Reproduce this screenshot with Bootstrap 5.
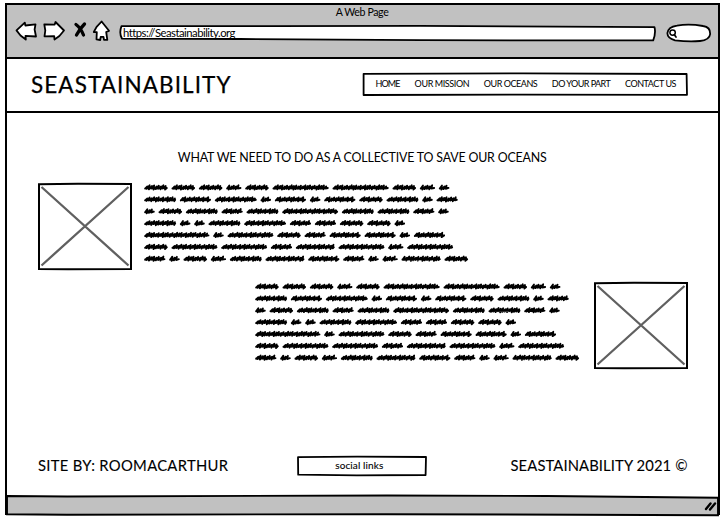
<!DOCTYPE html>
<html lang="en">
<head>
<meta charset="utf-8">
<meta name="viewport" content="width=device-width, initial-scale=1">
<title>A Web Page</title>
<link href="https://cdn.jsdelivr.net/npm/bootstrap@5.3.0/dist/css/bootstrap.min.css" rel="stylesheet">
<style>
  body { font-family: Lato, "Open Sans", sans-serif; color: #000; background: #fff; width: 724px; height: 521px; overflow: hidden; }
  svg { display: block; overflow: visible; }
  .frame { margin: 3px 0 0 5px; width: 714.5px; height: 512px; border: 2px solid #000; border-bottom: 0; }
  .chrome { height: 53.5px; background: #c1c1c1; border-bottom: 2px solid #000; }
  .tab-title { font-size: 10.6px; line-height: 12px; padding-top: 1px; }
  .tools { height: 28px; margin-top: 1px; }
  .ink { fill: #fff; stroke: #000; stroke-width: 1.8; stroke-linejoin: round; stroke-linecap: round; }
  .sketch { position: absolute; inset: 0; z-index: 0; }
  .fit { white-space: nowrap; display: inline-block; position: relative; z-index: 1; }
  .address { width: 536px; height: 16px; margin: 6px 0 0 8.5px; }
  .address .fit { font-size: 11.3px; line-height: 16px; margin-left: 3.5px; vertical-align: top; }
  .site-head { height: 54px; border-bottom: 2px solid #000; padding: 0 30px 0 24px; }
  .brand { font-size: 22.5px; line-height: 30px; -webkit-text-stroke: .25px #000; }
  .menu { width: 325px; height: 23px; padding: 0 11px 0 13px; }
  .menu .fit { font-size: 9px; line-height: 22px; color: #000; text-decoration: none; }
  .headline { font-size: 12.4px; line-height: 16px; margin-top: 37.5px; }
  .story { padding: 0 30px 0 31px; }
  .first { margin-top: 16.5px; }
  .second { margin-top: 12px; }
  .gap-right { margin-left: 13px; }
  .foot { padding: 0 30px 0 31px; height: 22px; margin-top: 87px; }
  .foot .fit { font-size: 14.8px; line-height: 18px; -webkit-text-stroke: .1px #000; }
  .social { width: 130px; height: 20px; margin-right: 14px; padding-right: 6px; }
  .social .fit { font-size: 10px; line-height: 18px; vertical-align: top; }
  .status { height: 20px; margin-top: 17px; }
</style>
<script src="https://cdn.jsdelivr.net/npm/bootstrap@5.3.0/dist/js/bootstrap.bundle.min.js"></script>
</head>
<body>
<div class="frame d-flex flex-column">
  <header class="chrome flex-shrink-0">
    <div class="tab-title text-center"><span class="fit" data-w="53">A Web Page</span></div>
    <div class="tools d-flex align-items-start">
      <svg width="104" height="28" class="ink flex-shrink-0" aria-label="Browser buttons">
        <path d="M9.5 11.4 L17.8 3.6 L18.4 6.5 L28.5 5.3 L27.6 10.5 L29 17.5 L18.5 16.8 L18.8 20.5 L13.5 16.5 Z"/>
        <path d="M37.3 5.3 L47.7 5.6 L48.5 3 L57 11.5 L52.4 17 L47.5 20.5 L47.2 17.2 L37.5 17.3 L38.3 11.5 Z"/>
        <path d="M69 5.5 Q73.5 8.5 76.5 16 M77.5 5 Q73 9.5 69.5 16" fill="none" stroke-width="3.3"/>
        <path d="M94.6 2.5 L102 11.8 L99.2 13 L100.3 20.8 L97 20.8 L96.5 17.8 L93.7 17.8 L93.2 21 L89.5 20.4 L89.8 13.2 L86.8 13 L89.6 7.9 Z"/>
      </svg>
      <div class="address position-relative">
        <svg class="sketch ink" width="536" height="16"><path d="M1.5 1.1 L150 1.2 L300 .8 L534.5 2.2 Q536 8 533.2 15.4 L300 15.2 L120 14 L2 13.7 Q-1.2 8 1.5 1.1Z"/></svg>
        <span class="fit" data-w="112">https://Seastainability.org</span>
      </div>
      <svg class="ink ms-2" width="50" height="28" aria-label="Search"><path d="M13 6.6 Q25 4.4 39 7 Q46.5 8 46.2 15 Q45.5 21 36 22 Q25 23 11 21.4 Q3.4 19 3.4 14.2 Q4 8 13 6.6Z"/><circle cx="8.6" cy="13.6" r="2.7" fill="none" stroke-width="1.5"/><path d="M10.4 15.8 L12 18" stroke-width="1.7"/></svg>
    </div>
  </header>

  <nav class="site-head d-flex align-items-center justify-content-between flex-shrink-0">
    <span class="brand fit" data-w="199.5">SEASTAINABILITY</span>
    <div class="menu position-relative d-flex justify-content-between">
      <svg class="sketch ink" width="325" height="23"><path fill="none" d="M.6 .8 L160 .4 L323.6 1 L324 21.8 L160 21.6 L.6 22Z"/></svg>
      <a href="#" class="fit" data-w="25">HOME</a>
      <a href="#" class="fit" data-w="55">OUR MISSION</a>
      <a href="#" class="fit" data-w="54">OUR OCEANS</a>
      <a href="#" class="fit" data-w="59">DO YOUR PART</a>
      <a href="#" class="fit" data-w="51.5">CONTACT US</a>
    </div>
  </nav>

  <main>
    <h1 class="headline text-center fw-normal mb-0"><span class="fit" data-w="369">WHAT WE NEED TO DO AS A COLLECTIVE TO SAVE OUR OCEANS</span></h1>
    <section class="story first d-flex">
      <svg class="picture" width="94" height="87"></svg>
      <svg class="copy ms-2" width="330" height="87"></svg>
    </section>
    <section class="story second d-flex justify-content-end">
      <svg class="copy" width="330" height="87"></svg>
      <svg class="picture gap-right" width="94" height="87"></svg>
    </section>
  </main>

  <footer class="foot d-flex justify-content-between align-items-start flex-shrink-0">
    <span class="fit" data-w="190">SITE BY: ROOMACARTHUR</span>
    <div class="social position-relative text-center">
      <svg class="sketch ink" width="130" height="20"><path fill="none" d="M1 1.2 L60 .6 L129 1 L128.6 19 L60 19.4 L1.2 18.7Z"/></svg>
      <span class="fit" data-w="48">social links</span>
    </div>
    <span class="fit" data-w="177">SEASTAINABILITY 2021 ©</span>
  </footer>
  <div class="status">
    <svg width="710" height="20"><path d="M0 1 L60 1.5 L380 .5 L540 1 L711 2.8 V20.2 L380 19.2 L60 19.7 L0 19.2Z" fill="#c1c1c1" stroke="#000" stroke-width="1.9"/><path d="M699 14 L703.5 8.5 M703 14.5 L708 8.5" stroke="#000" stroke-width="2.4" stroke-linecap="round"/></svg>
  </div>
</div>
<script>
  // Letter spacing that brings each label to its set width
  document.querySelectorAll('.fit').forEach(el => {
    const n = el.textContent.length, gap = (el.dataset.w - el.getBoundingClientRect().width) / (n - 1);
    el.style.letterSpacing = gap + 'px';
    el.style.marginRight = -gap + 'px';
  });

  document.querySelectorAll('.picture').forEach(el => {
    el.innerHTML = '<path d="M3.5 4 L90.5 82.5 M90.5 4 L3.5 82.5" stroke="#606060" stroke-width="2.3"/>' +
      '<path d="M1 1.3 L40 .8 L93 1 L93 86 L30 86.2 L1 86Z" fill="none" stroke="#000" stroke-width="2"/>';
  });

  // Scribbled words, widths in thirds of a pixel
  const rows = [
    [70,70,70,45,70,168,168,70,45,31],
    [95,93,125,31,93,31,93,70,95,31,63],
    [31,70,95,63,95,167,95,95,63,31],
    [95,31,31,95,125,63,63,70,70,31],
    [195,31,137,70,63,93,93,31,93],
    [70,137,137,63,116,137,45,137],
    [63,31,70,45,95,116,93,63,31,45,117,70]
  ];
  // Each stroke leans right: up to a peak, then back down a little behind it
  const peak = [1.2, 2.3, 1.6, 2.2, 1.1, 2];
  const base = [1.2, 1.8, .9, 2.1, 1.5];
  let d = '';
  rows.forEach((words, r) => {
    let x = 0;
    const y = 4.6 + r * 11.87;
    words.forEach(w => {
      const len = w / 3, end = x + len - .8;
      let px = x + .8, k = w % 7;
      d += `M${px} ${y + .7}L${end} ${y + .3}M${px} ${y + 1}`;
      while (px < end - 2) {
        const up = peak[k % 6], down = base[k % 5];
        d += `L${(px + 2.2).toFixed(2)} ${(y - up).toFixed(2)}L${(px + 1.5).toFixed(2)} ${(y + down).toFixed(2)}`;
        px += 2.3;
        k++;
      }
      d += `L${end} ${y + .4}`;
      x += len + 4;
    });
  });
  document.querySelectorAll('.copy').forEach(el => {
    el.innerHTML = `<path transform="translate(4.3 0)" d="${d}" fill="none" stroke="#000" stroke-width="1.8" stroke-linecap="round" stroke-linejoin="round"/>`;
  });
</script>
</body>
</html>
